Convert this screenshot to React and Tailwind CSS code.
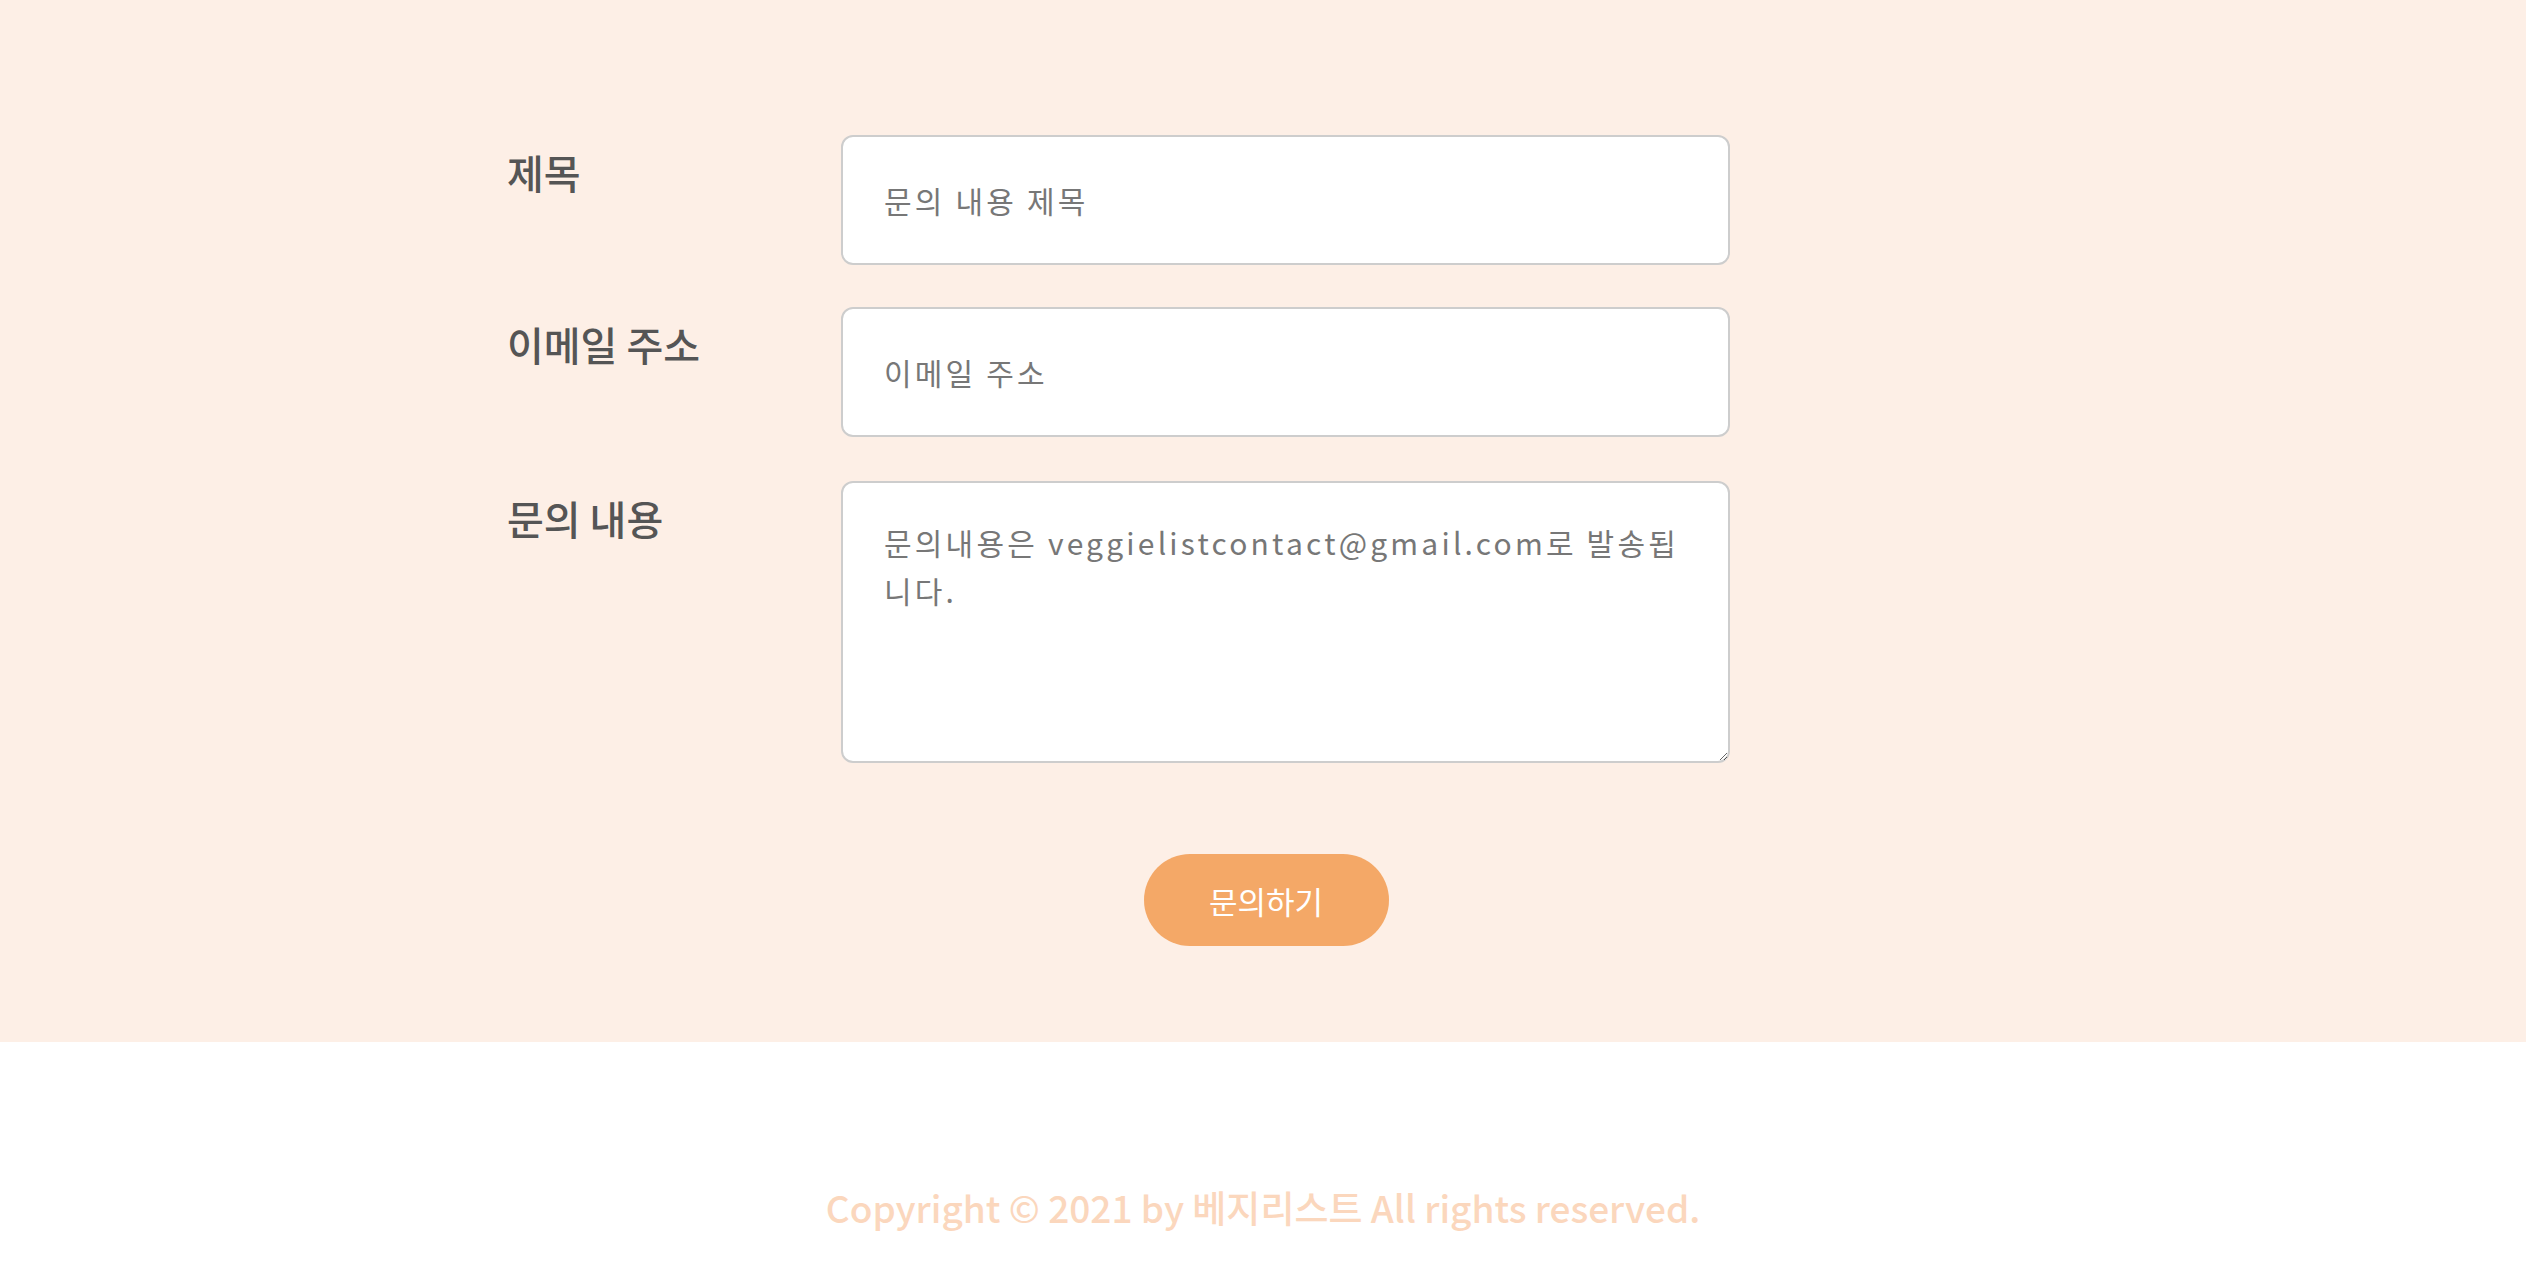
import React from "react";

const font = { fontFamily: '"Noto Sans CJK KR", "Noto Sans", sans-serif' };

function Row({ label, children, className = "" }) {
  return (
    <div className={`flex ${className}`}>
      <div className="w-[334px] shrink-0 pt-[13px] text-[40px] leading-[48px] text-[#555555] font-medium">
        {label}
      </div>
      {children}
    </div>
  );
}

export default function App() {
  return (
    <div style={font} className="w-full min-h-[1274px] flex flex-col">
      <section className="bg-[#fdefe6] h-[1042px] flex flex-col items-center pt-[135px]">
        <form className="w-[1512px] flex flex-col" onSubmit={(e) => e.preventDefault()}>
          <Row label="제목">
            <input
              type="text"
              placeholder="문의 내용 제목"
              className="w-[889px] h-[130px] bg-white border-2 border-[#cdcdcd] rounded-[12px] px-[41px] text-[30px] tracking-[3.2px] text-[#777777] placeholder:text-[#777777] outline-none"
            />
          </Row>
          <Row label="이메일 주소" className="mt-[42px]">
            <input
              type="email"
              placeholder="이메일 주소"
              className="w-[889px] h-[130px] bg-white border-2 border-[#cdcdcd] rounded-[12px] px-[41px] text-[30px] tracking-[3.2px] text-[#777777] placeholder:text-[#777777] outline-none"
            />
          </Row>
          <Row label="문의 내용" className="mt-[44px]">
            <textarea
              placeholder="문의내용은 veggielistcontact@gmail.com로 발송됩니다."
              className="w-[889px] h-[282px] bg-white border-2 border-[#cdcdcd] rounded-[12px] px-[41px] pt-[35px] text-[30px] leading-[48px] tracking-[3.2px] text-[#777777] placeholder:text-[#777777] outline-none"
            />
          </Row>
        </form>
        <button
          type="button"
          className="mt-[91px] ml-[6px] w-[245px] h-[92px] rounded-full bg-[#f4a867] text-white text-[31px] leading-none"
        >
          문의하기
        </button>
      </section>
      <footer className="bg-white h-[232px] flex justify-center pt-[137px]">
        <p className="text-[37px] leading-[56px] text-[#fbd7bd] font-medium">
          Copyright © 2021 by 베지리스트 All rights reserved.
        </p>
      </footer>
    </div>
  );
}
